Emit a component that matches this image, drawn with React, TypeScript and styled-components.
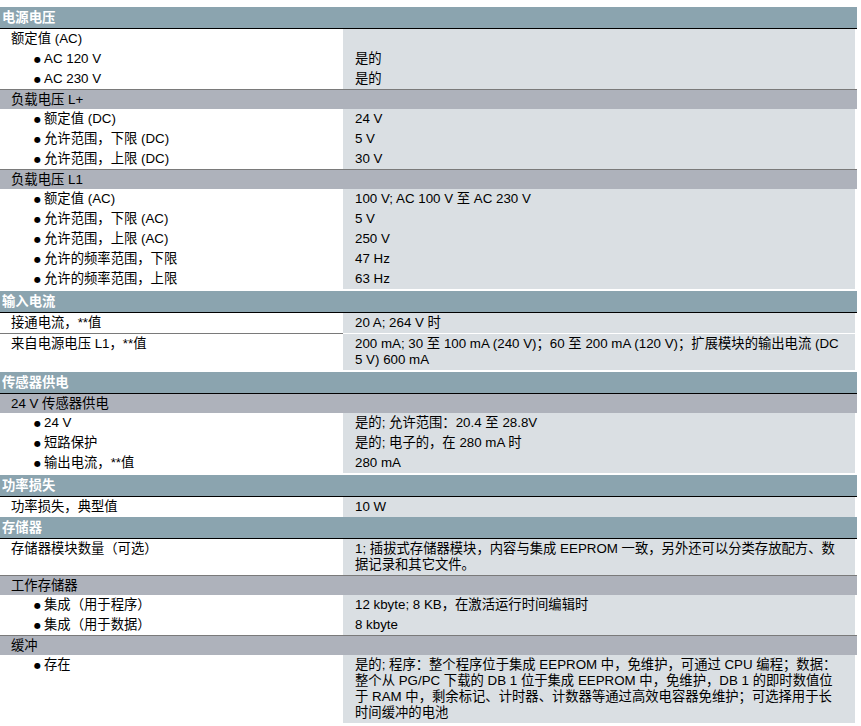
import React from "react";
import styled, { createGlobalStyle } from "styled-components";

const GlobalStyle = createGlobalStyle`
  html, body {
    margin: 0;
    padding: 0;
    background: #ffffff;
  }
  body {
    font-family: "Liberation Sans", Arial, "Noto Sans CJK SC", sans-serif;
    font-size: 13.333px;
    color: #000000;
  }
`;

type Item =
  | { kind: "row"; label: string; value?: string; bullet?: boolean }
  | { kind: "group"; label: string };

type Section = { title: string; gapBefore: number; items: Item[] };

const sections: Section[] = [
  {
    title: "电源电压",
    gapBefore: 0,
    items: [
      { kind: "row", label: "额定值 (AC)" },
      { kind: "row", label: "AC 120 V", value: "是的", bullet: true },
      { kind: "row", label: "AC 230 V", value: "是的", bullet: true },
      { kind: "group", label: "负载电压 L+" },
      { kind: "row", label: "额定值 (DC)", value: "24 V", bullet: true },
      { kind: "row", label: "允许范围，下限 (DC)", value: "5 V", bullet: true },
      { kind: "row", label: "允许范围，上限 (DC)", value: "30 V", bullet: true },
      { kind: "group", label: "负载电压 L1" },
      { kind: "row", label: "额定值 (AC)", value: "100 V; AC 100 V 至 AC 230 V", bullet: true },
      { kind: "row", label: "允许范围，下限 (AC)", value: "5 V", bullet: true },
      { kind: "row", label: "允许范围，上限 (AC)", value: "250 V", bullet: true },
      { kind: "row", label: "允许的频率范围，下限", value: "47 Hz", bullet: true },
      { kind: "row", label: "允许的频率范围，上限", value: "63 Hz", bullet: true },
    ],
  },
  {
    title: "输入电流",
    gapBefore: 2,
    items: [
      { kind: "row", label: "接通电流，**值", value: "20 A; 264 V 时" },
      {
        kind: "row",
        label: "来自电源电压 L1，**值",
        value:
          "200 mA; 30 至 100 mA (240 V)；60 至 200 mA (120 V)；扩展模块的输出电流 (DC 5 V) 600 mA",
      },
    ],
  },
  {
    title: "传感器供电",
    gapBefore: 2,
    items: [
      { kind: "group", label: "24 V 传感器供电" },
      { kind: "row", label: "24 V", value: "是的; 允许范围：20.4 至 28.8V", bullet: true },
      { kind: "row", label: "短路保护", value: "是的; 电子的，在 280 mA 时", bullet: true },
      { kind: "row", label: "输出电流，**值", value: "280 mA", bullet: true },
    ],
  },
  {
    title: "功率损失",
    gapBefore: 2,
    items: [{ kind: "row", label: "功率损失，典型值", value: "10 W" }],
  },
  {
    title: "存储器",
    gapBefore: 0,
    items: [
      {
        kind: "row",
        label: "存储器模块数量（可选）",
        value:
          "1; 插拔式存储器模块，内容与集成 EEPROM 一致，另外还可以分类存放配方、数据记录和其它文件。",
      },
      { kind: "group", label: "工作存储器" },
      { kind: "row", label: "集成（用于程序）", value: "12 kbyte; 8 KB，在激活运行时间编辑时", bullet: true },
      { kind: "row", label: "集成（用于数据）", value: "8 kbyte", bullet: true },
      { kind: "group", label: "缓冲" },
      {
        kind: "row",
        label: "存在",
        value:
          "是的; 程序：整个程序位于集成 EEPROM 中，免维护，可通过 CPU 编程；数据：整个从 PG/PC 下载的 DB 1 位于集成 EEPROM 中，免维护，DB 1 的即时数值位于 RAM 中，剩余标记、计时器、计数器等通过高效电容器免维护；可选择用于长时间缓冲的电池",
        bullet: true,
      },
    ],
  },
];

const Page = styled.div`
  padding-top: 7px;
  width: 857px;
  display: flex;
  flex-direction: column;
`;

const SectionBox = styled.section<{ $gapBefore: number }>`
  display: flex;
  flex-direction: column;
  margin-top: ${(p) => p.$gapBefore}px;
`;

const SectionHeader = styled.div`
  height: 21px;
  line-height: 21px;
  background: #8ba4af;
  color: #ffffff;
  font-weight: bold;
  padding-left: 2px;
  border-bottom: 1px solid #000000;
`;

const GroupRow = styled.div<{ $divided: boolean }>`
  height: 19px;
  line-height: 19px;
  background: #aeb2bb;
  padding-left: 11px;
  border-top: ${(p) => (p.$divided ? "1px solid #7a7a7a" : "none")};
`;

const DataRow = styled.div`
  display: grid;
  grid-template-columns: 343px 1fr;
`;

const LabelCell = styled.div<{ $bullet: boolean; $divided: boolean }>`
  padding: 2px 6px 2px ${(p) => (p.$bullet ? "34px" : "11px")};
  line-height: 16px;
  border-top: ${(p) => (p.$divided ? "1px solid #7a7a7a" : "none")};
`;

const ValueCell = styled.div<{ $divided: boolean }>`
  background: #dadfe3;
  margin-right: 2px;
  padding: 2px 14px 2px 12px;
  line-height: 16px;
  border-top: ${(p) => (p.$divided ? "1px solid #ffffff" : "none")};
`;

const Bullet = styled.span`
  display: inline-block;
  width: 10px;
  font-family: "DejaVu Sans", sans-serif;
  font-size: 8px;
  line-height: 8px;
  vertical-align: 1px;
`;

function renderItems(items: Item[]) {
  return items.map((item, i) => {
    const prev = i > 0 ? items[i - 1] : null;
    if (item.kind === "group") {
      return (
        <GroupRow key={i} $divided={i > 0}>
          {item.label}
        </GroupRow>
      );
    }
    const divided = !!prev && prev.kind === "row" && !item.bullet && !prev.bullet;
    return (
      <DataRow key={i}>
        <LabelCell $bullet={!!item.bullet} $divided={divided}>
          {item.bullet && <Bullet>●</Bullet>}
          {item.label}
        </LabelCell>
        <ValueCell $divided={divided}>{item.value ?? ""}</ValueCell>
      </DataRow>
    );
  });
}

export default function App() {
  return (
    <>
      <GlobalStyle />
      <Page>
        {sections.map((s) => (
          <SectionBox key={s.title} $gapBefore={s.gapBefore}>
            <SectionHeader>{s.title}</SectionHeader>
            {renderItems(s.items)}
          </SectionBox>
        ))}
      </Page>
    </>
  );
}
